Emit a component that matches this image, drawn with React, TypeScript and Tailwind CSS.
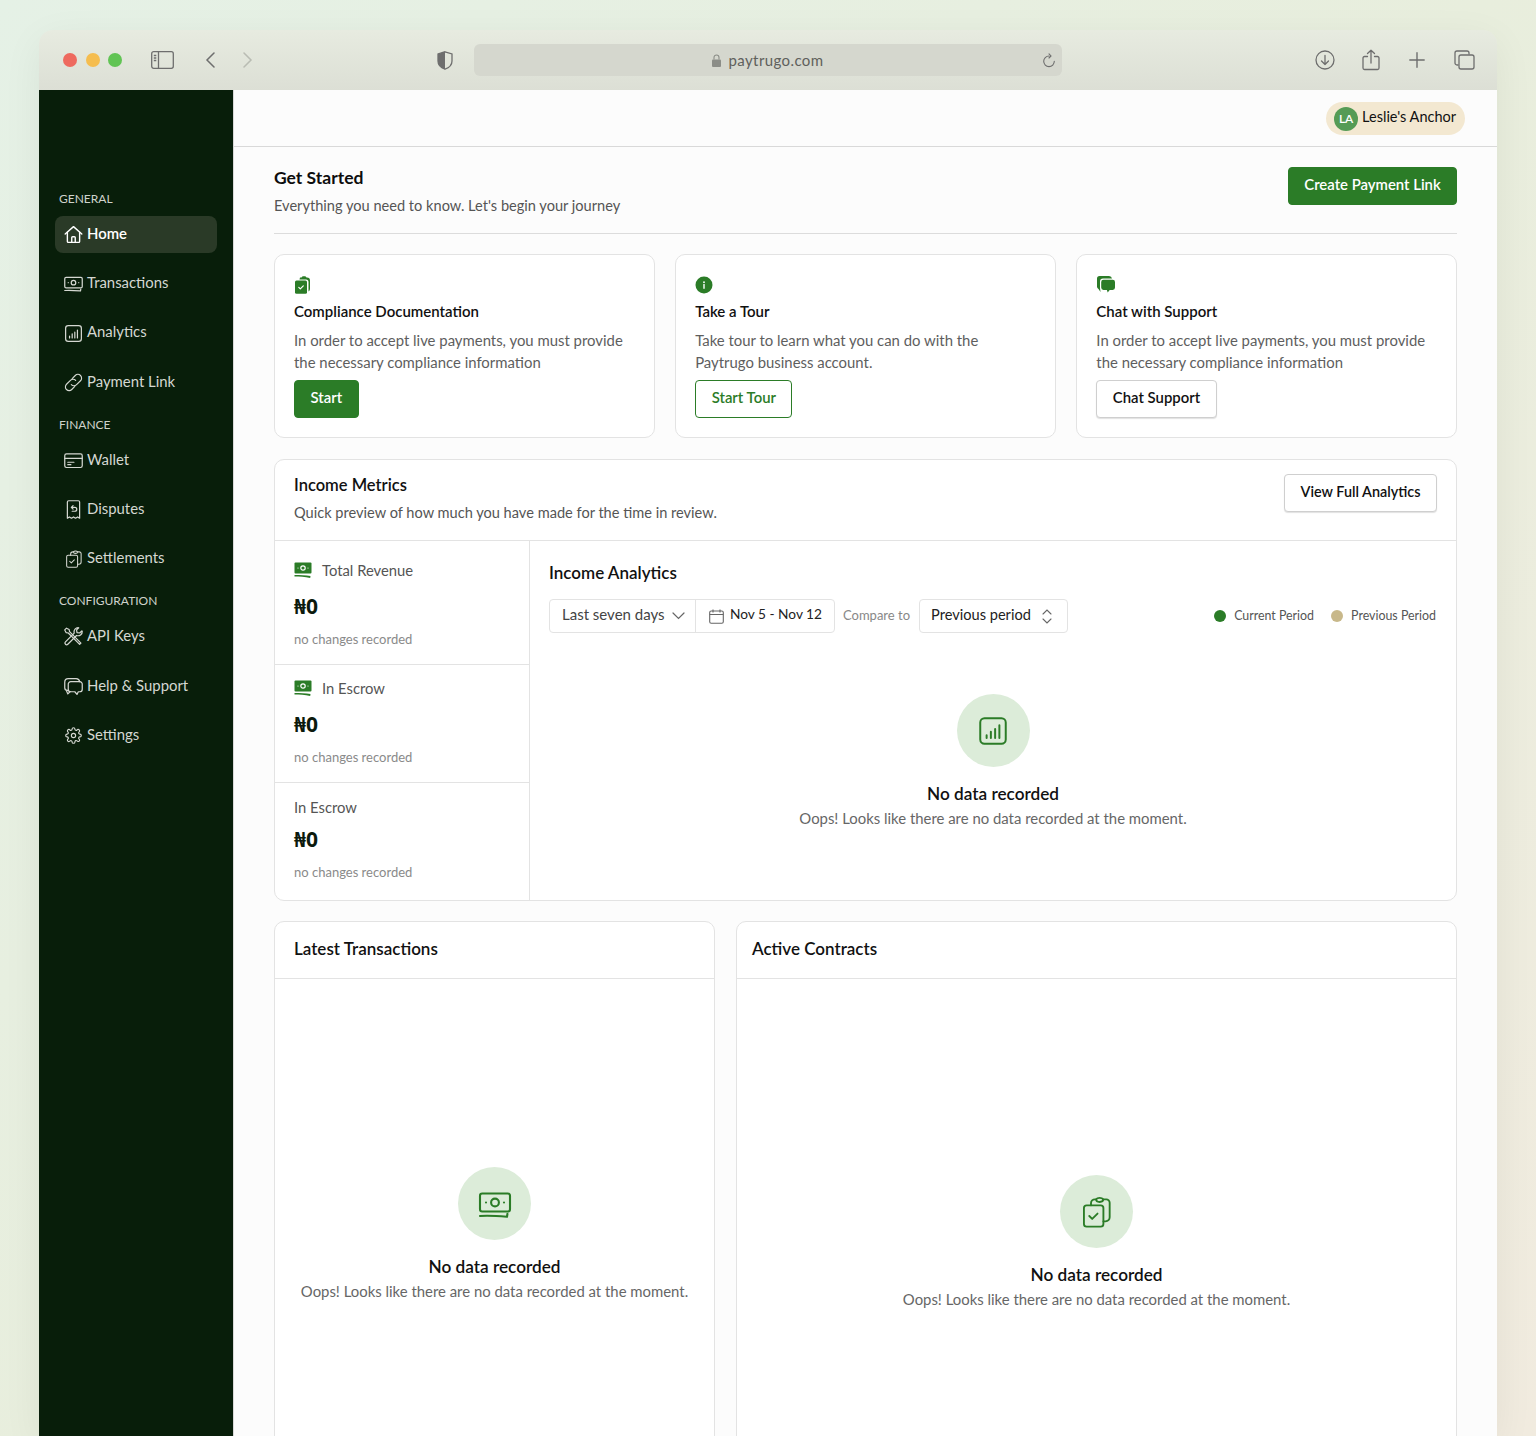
import type { ReactNode } from 'react';

type IconProps = { className?: string };

const Svg = ({ className, children, vb = '0 0 24 24', sw = 1.5 }: { className?: string; children: ReactNode; vb?: string; sw?: number }) => (
  <svg className={className} viewBox={vb} fill="none" stroke="currentColor" strokeWidth={sw} strokeLinecap="round" strokeLinejoin="round">
    {children}
  </svg>
);

// Sidebar + empty state icons
const HomeIcon = ({ className }: IconProps) => (
  <Svg className={className} sw={1.6}>
    <path d="M2.500 11.500 12 3l9.500 8.500" />
    <path d="M5 9.500V20a1 1 0 0 0 1 1h12a1 1 0 0 0 1-1V9.500" />
    <path d="M10 21v-5.500a1 1 0 0 1 1-1h2a1 1 0 0 1 1 1V21" />
  </Svg>
);
const CashIcon = ({ className }: IconProps) => (
  <Svg className={className} sw={1.4}>
    <rect x="2" y="5" width="20" height="12" rx="1.500" />
    <circle cx="12" cy="11" r="2.600" />
    <path d="M6 11h.01M18 11h.01M2 20c6-.5 12 0 18 .5l.300-2" />
  </Svg>
);
const ChartIcon = ({ className }: IconProps) => (
  <Svg className={className} sw={1.4}>
    <rect x="3" y="3" width="18" height="18" rx="3" />
    <path d="M7.500 17v-2M10.500 17v-4.500M13.500 17v-6.500M16.500 17V8" />
  </Svg>
);
const LinkIcon = ({ className }: IconProps) => (
  <Svg className={className} sw={1.3}>
    <path d="M10.500 7.500 14 4a4.200 4.200 0 0 1 6 6l-4.500 4.500a4.200 4.200 0 0 1-6 0" />
    <path d="M13.500 16.500 10 20a4.200 4.200 0 0 1-6-6l4.500-4.500a4.200 4.200 0 0 1 6 0" />
  </Svg>
);
const WalletIcon = ({ className }: IconProps) => (
  <Svg className={className} sw={1.4}>
    <rect x="2" y="4.500" width="20" height="15.500" rx="2" />
    <path d="M2 9.500h20M5.500 14h7M5.500 16.800h3.500" />
  </Svg>
);
const DisputeIcon = ({ className }: IconProps) => (
  <Svg className={className} sw={1.4}>
    <path d="M5 3.500a1.500 1.500 0 0 1 1.500-1.500h11A1.500 1.500 0 0 1 19 3.500V22l-2.300-1.500L14.300 22 12 20.500 9.700 22l-2.400-1.500L5 22z" />
    <path d="M10 9.500h3.500a2.200 2.200 0 0 1 0 4.500H10.500M11.500 7.500l-2 2 2 2" />
  </Svg>
);
const ClipboardsIcon = ({ className }: IconProps) => (
  <Svg className={className} sw={1.4}>
    <rect x="2.200" y="7" width="14.600" height="16" rx="2" />
    <path d="M7.500 7V5.500a3 3 0 0 1 3-3h.8a3 2 0 0 1 5.400 0h2.300a2.500 2.500 0 0 1 2.500 2.500V16a3 3 0 0 1-3 3h-1.700" />
    <path d="M11.300 2.500c0 1.300 1.200 2 2.700 2s2.700-.7 2.700-2M6.200 15l2.200 2.200 4-4" />
  </Svg>
);
const ToolsIcon = ({ className }: IconProps) => (
  <Svg className={className} sw={1.4}>
    <path d="m4 2.500 3 1.500.5 2.500 13 13-1.500 1.500-13-13L3.500 7.500 2 4.500z" />
    <path d="M22 6a4.800 4.800 0 0 1-6.500 4.800L5.500 20.800a1.900 1.900 0 0 1-2.700-2.700l10-10A4.800 4.800 0 0 1 18 2l-2.500 2.500.5 3 3 .5L21.500 5.500z" />
  </Svg>
);
const ChatsIcon = ({ className }: IconProps) => (
  <Svg className={className} sw={1.4}>
    <path d="M6 16.500H5a3 3 0 0 1-3-3V7a4 4 0 0 1 4-4h9a4 4 0 0 1 4 3.500" />
    <path d="M6 10a3 3 0 0 1 3-3.500h10a3 3 0 0 1 3 3.500v5a3 3 0 0 1-3 3h-1.500L16 21l-2.500-3H9a3 3 0 0 1-3-3z" />
    <path d="M4 17l1.500 3.500L8 18" />
  </Svg>
);
const GearIcon = ({ className }: IconProps) => (
  <Svg className={className} sw={1.6}>
    <circle cx="12" cy="12" r="3" />
    <path d="M19.400 15a1.700 1.700 0 0 0 .3 1.800l.1.100a2 2 0 1 1-2.800 2.800l-.1-.1a1.700 1.700 0 0 0-2.900 1.200V21a2 2 0 1 1-4 0v-.1a1.700 1.700 0 0 0-2.900-1.200l-.1.100a2 2 0 1 1-2.800-2.800l.1-.1a1.700 1.700 0 0 0-1.200-2.900H3a2 2 0 1 1 0-4h.1a1.700 1.700 0 0 0 1.200-2.900l-.1-.1a2 2 0 1 1 2.800-2.800l.1.100a1.700 1.700 0 0 0 2.900-1.200V3a2 2 0 1 1 4 0v.1a1.700 1.700 0 0 0 2.900 1.200l.1-.1a2 2 0 1 1 2.800 2.800l-.1.100a1.700 1.700 0 0 0 1.200 2.900h.1a2 2 0 1 1 0 4h-.1a1.700 1.700 0 0 0-1.500 1z" />
  </Svg>
);

// Solid green icons
const SolidClipboards = () => (
  <svg className="h-[18px] w-[18px]" viewBox="0 0 18 18">
    <path d="M6 1.500h1.500C8 .6 8.600.3 9.500.3h1c.9 0 1.500.3 2 1.200h.5a3 3 0 0 1 3 3v8.500a3 3 0 0 1-1.500 2.500V6a2.500 2.500 0 0 0-2.500-2.500H5.500z" fill="#2b7c27" />
    <rect x="1" y="4.500" width="12" height="13.200" rx="1.500" fill="#2b7c27" />
    <path d="m4.800 11.300 1.500 1.500 3-3" stroke="#fff" strokeWidth="1.200" fill="none" strokeLinecap="round" strokeLinejoin="round" />
  </svg>
);
const SolidInfo = () => (
  <svg className="h-[18px] w-[18px]" viewBox="0 0 18 18">
    <circle cx="9" cy="9" r="8.500" fill="#2b7c27" />
    <circle cx="9" cy="6.200" r=".9" fill="#fff" />
    <path d="M9 8.500v3.700" stroke="#fff" strokeWidth="1.400" strokeLinecap="round" />
  </svg>
);
const SolidChats = () => (
  <svg className="h-[20px] w-[20px]" viewBox="0 0 20 20">
    <path d="M3.500 1h9.500a3 3 0 0 1 3 2.500H7a3 3 0 0 0-3 3V13l.5 4L2.500 14A2.500 2.500 0 0 1 1 11.800V3.500A2.500 2.500 0 0 1 3.500 1z" fill="#2b7c27" />
    <path d="M7.500 4.800h9.200a2.300 2.300 0 0 1 2.300 2.300v5.500a2.300 2.300 0 0 1-2.300 2.300h-3l-2 2.600-.8-2.600H7.500a2.300 2.300 0 0 1-2.300-2.300V7.100a2.300 2.300 0 0 1 2.300-2.300z" fill="#2b7c27" />
  </svg>
);
const SolidCash = () => (
  <svg className="h-[17px] w-[18px]" viewBox="0 0 18 17">
    <rect x="0.500" y="0.500" width="17" height="11" rx="1" fill="#2b7c27" />
    <circle cx="9" cy="6" r="2.200" fill="none" stroke="#fff" strokeWidth="1.200" />
    <circle cx="4" cy="6" r=".6" fill="#fff" />
    <circle cx="14" cy="6" r=".6" fill="#fff" />
    <path d="M.5 13c5.500 0 11 .3 16 1l-.3 2C11 14.800 5.500 14.500.5 14.500z" fill="#2b7c27" />
  </svg>
);

type NavItem = { label: string; icon: (p: IconProps) => ReactNode; active?: boolean; iconClass?: string };

const generalNav: NavItem[] = [
  { label: 'Home', icon: HomeIcon, active: true },
  { label: 'Transactions', icon: CashIcon },
  { label: 'Analytics', icon: ChartIcon },
  { label: 'Payment Link', icon: LinkIcon },
];
const financeNav: NavItem[] = [
  { label: 'Wallet', icon: WalletIcon },
  { label: 'Disputes', icon: DisputeIcon },
  { label: 'Settlements', icon: ClipboardsIcon, iconClass: 'mx-[1.5px] h-[18px] w-[18px]' },
];
const configNav: NavItem[] = [
  { label: 'API Keys', icon: ToolsIcon },
  { label: 'Help & Support', icon: ChatsIcon },
  { label: 'Settings', icon: GearIcon, iconClass: 'mx-[2px] h-[17px] w-[17px]' },
];

const NavGroup = ({ title, items, className }: { title: string; items: NavItem[]; className?: string }) => (
  <div className={className}>
    <div className="mb-[9px] h-4 pl-[20px] text-[12px] leading-4 text-[#cfd3cc]">{title}</div>
    <div className="flex flex-col gap-[12.3px] px-4">
      {items.map(item => {
        const Icon = item.icon;
        return (
          <div
            key={item.label}
            className={`flex h-[37px] items-center gap-[3px] rounded-lg pl-[8px] pr-2 text-[14.9px] ${item.active ? 'bg-[#2a3a27] font-semibold text-white' : 'text-[#d5d8d2]'}`}
          >
            <Icon className={`shrink-0 ${item.iconClass ?? 'h-[21px] w-[21px]'}`} />
            <span className="-mt-[3px]">{item.label}</span>
          </div>
        );
      })}
    </div>
  </div>
);

const Sidebar = () => (
  <aside className="w-[195px] shrink-0 border-r border-[#d9d9d9] bg-[#081e0a] pt-[101px]">
    <NavGroup title="GENERAL" items={generalNav} />
    <NavGroup title="FINANCE" items={financeNav} className="mt-[16px]" />
    <NavGroup title="CONFIGURATION" items={configNav} className="mt-[16px]" />
  </aside>
);

const BrowserBar = () => (
  <div className="flex h-[60px] items-center bg-[linear-gradient(180deg,#e7ebe0,#dcdfd5)] text-[#6e6e6e]">
    <div className="ml-[24px] flex items-center gap-[8.5px]">
      <span className="h-[14px] w-[14px] rounded-full bg-[#ee6a5f]" />
      <span className="h-[14px] w-[14px] rounded-full bg-[#f5bd4f]" />
      <span className="h-[14px] w-[14px] rounded-full bg-[#61c454]" />
    </div>
    <svg className="ml-[29px] h-[18px] w-[23px]" viewBox="0 0 23 18" fill="none" stroke="currentColor" strokeWidth="1.300">
      <rect x=".7" y=".7" width="21.600" height="16.600" rx="2" />
      <path d="M7.500.7v16.600M2.800 4.500h2.500M2.800 7h2.500M2.800 9.500h2.500" />
    </svg>
    <svg className="ml-[31px] h-[16px] w-[10px]" viewBox="0 0 10 16" fill="none" stroke="currentColor" strokeWidth="1.500" strokeLinecap="round">
      <path d="M9 1 2 8l7 7" />
    </svg>
    <svg className="ml-[28px] h-[16px] w-[10px] text-[#b9bcb3]" viewBox="0 0 10 16" fill="none" stroke="currentColor" strokeWidth="1.500" strokeLinecap="round">
      <path d="m1 1 7 7-7 7" />
    </svg>
    <svg className="ml-[184px] h-[19px] w-[16px]" viewBox="0 0 16 19">
      <path d="M8 .8 15 3v7c0 4-3 6.800-7 8.200C4 16.800 1 14 1 10V3z" fill="none" stroke="currentColor" strokeWidth="1.300" />
      <path d="M8 .8V18.200C4 16.800 1 14 1 10V3z" fill="currentColor" />
    </svg>
    <div className="relative ml-[21px] flex h-[32px] w-[588px] items-center justify-center rounded-md bg-[#d5d7ce]">
      <svg className="mr-[7px] h-[13px] w-[9px] text-[#8b8d87]" viewBox="0 0 9 13">
        <path d="M2 5.500V3.500a2.500 2.500 0 0 1 5 0v2" fill="none" stroke="currentColor" strokeWidth="1.100" />
        <rect y="5.500" width="9" height="7.500" rx="1" fill="currentColor" />
      </svg>
      <span className="text-[15px] tracking-[0.4px] text-[#5f605c]">paytrugo.com</span>
      <svg className="absolute right-[6px] top-[9px] h-[15px] w-[14px]" viewBox="0 0 14 15" fill="none" stroke="currentColor" strokeWidth="1.100" strokeLinecap="round">
        <path d="M7 3a5.300 5.300 0 1 0 5.300 5.300M7 .8 9 3 7 5" />
      </svg>
    </div>
    <svg className="ml-[253px] h-[20px] w-[20px]" viewBox="0 0 20 20" fill="none" stroke="currentColor" strokeWidth="1.300" strokeLinecap="round" strokeLinejoin="round">
      <circle cx="10" cy="10" r="9" />
      <path d="M10 5.500v9M6.500 11l3.500 3.500 3.500-3.500" />
    </svg>
    <svg className="ml-[27px] h-[22px] w-[18px]" viewBox="0 0 18 22" fill="none" stroke="currentColor" strokeWidth="1.300" strokeLinecap="round" strokeLinejoin="round">
      <path d="M5.500 7.500H2.500a1.500 1.500 0 0 0-1.500 1.500v10a1.500 1.500 0 0 0 1.500 1.500h13A1.500 1.500 0 0 0 17 19V9a1.500 1.500 0 0 0-1.500-1.500h-3" />
      <path d="M9 14V1.200M5.500 4.500 9 1.200l3.500 3.300" />
    </svg>
    <svg className="ml-[29px] h-[16px] w-[16px]" viewBox="0 0 16 16" fill="none" stroke="currentColor" strokeWidth="1.400" strokeLinecap="round">
      <path d="M8 .8v14.400M.8 8h14.400" />
    </svg>
    <svg className="ml-[29px] h-[20px] w-[21px]" viewBox="0 0 21 20" fill="none" stroke="currentColor" strokeWidth="1.300">
      <path d="M4.500 15H3a2 2 0 0 1-2-2V3a2 2 0 0 1 2-2h10a2 2 0 0 1 2 2v1.500" />
      <rect x="5" y="5" width="15" height="14" rx="2" />
    </svg>
  </div>
);

const Button = ({ children, variant, className, size = 'text-[14.9px]' }: { children: ReactNode; variant: 'solid' | 'green' | 'plain'; className?: string; size?: string }) => {
  const styles = {
    solid: 'bg-[#2b7c27] text-white border-[#2b7c27]',
    green: 'bg-white text-[#2b7c27] border-[#2b7c27]',
    plain: 'bg-white text-[#111] border-[#cfcfcf] shadow-[0_1px_1px_rgba(0,0,0,0.12)]',
  }[variant];
  return (
    <button className={`flex h-[38px] items-center justify-center whitespace-nowrap rounded-[4px] border px-[15.5px] pb-[3px] font-semibold ${size} ${styles} ${className ?? ''}`}>
      {children}
    </button>
  );
};

const GuideCard = ({ icon, title, text, action }: { icon: ReactNode; title: string; text: ReactNode; action: ReactNode }) => (
  <div className="h-[184px] rounded-[10px] border border-[#e3e3e3] bg-white px-[19px] pt-[20px]">
    <div className="flex h-[19px] items-center">{icon}</div>
    <h3 className="mt-[7px] text-[15px] font-semibold leading-[20px] text-[#111]">{title}</h3>
    <p className="mt-[8px] text-[14.9px] leading-[22px] text-[#5e5e5e]">{text}</p>
    <div className="mt-[7px] flex">{action}</div>
  </div>
);

const Metric = ({ label, icon, className, valueGap = 'mt-[12px]' }: { label: string; icon?: boolean; className?: string; valueGap?: string }) => (
  <div className={`px-[19px] ${className ?? ''}`}>
    <div className="flex h-[20px] items-center gap-[10px] text-[14.8px] text-[#555]">
      {icon && <SolidCash />}
      <span>{label}</span>
    </div>
    <div className={`${valueGap} font-[family-name:'Noto_Sans',sans-serif] text-[21px] font-bold leading-[28px] text-[#0c1a0d]`}>₦0</div>
    <div className="mt-[10px] text-[13px] leading-[18px] text-[#8a8a8a]">no changes recorded</div>
  </div>
);

const EmptyState = ({ icon, className }: { icon: ReactNode; className?: string }) => (
  <div className={`flex flex-col items-center ${className ?? ''}`}>
    <div className="flex h-[73px] w-[73px] items-center justify-center rounded-full bg-[#dcecd9] text-[#2b7c27]">{icon}</div>
    <div className="mt-[15.5px] text-[17.2px] font-semibold leading-[22px] text-[#111]">No data recorded</div>
    <div className="mt-[3.5px] text-[14.9px] leading-[20px] text-[#666]">Oops! Looks like there are no data recorded at the moment.</div>
  </div>
);

const Dashboard = () => (
  <main className="min-w-0 flex-1 bg-[#fcfcfc]">
    <header className="flex h-[57px] items-start justify-end border-b border-[#d9d9d9] pr-[32px] pt-[12px]">
      <div className="flex h-[33px] items-center gap-[4px] rounded-full bg-[#f3e8d1] pl-[8px] pr-[9px]">
        <span className="flex h-6 w-6 items-center justify-center rounded-full bg-[#559b55] text-[12px] font-semibold text-white">LA</span>
        <span className="-mt-[3px] text-[14.5px] text-[#111]">Leslie's Anchor</span>
      </div>
    </header>

    <div className="px-[40px] pt-[20px]">
      <div className="flex items-start justify-between border-b border-[#dcdcdc] pb-[17px]">
        <div>
          <h1 className="text-[17.5px] font-bold leading-[22px] text-[#0d0d0d]">Get Started</h1>
          <p className="mt-[7px] text-[14.6px] leading-[20px] text-[#555]">Everything you need to know. Let's begin your journey</p>
        </div>
        <Button variant="solid" className="w-[169px]">Create Payment Link</Button>
      </div>

      <div className="mt-[20px] grid grid-cols-3 gap-[20.5px]">
        <GuideCard
          icon={<SolidClipboards />}
          title="Compliance Documentation"
          text={<>In order to accept live payments, you must provide<br />the necessary compliance information</>}
          action={<Button variant="solid">Start</Button>}
        />
        <GuideCard
          icon={<SolidInfo />}
          title="Take a Tour"
          text={<>Take tour to learn what you can do with the<br />Paytrugo business account.</>}
          action={<Button variant="green">Start Tour</Button>}
        />
        <GuideCard
          icon={<SolidChats />}
          title="Chat with Support"
          text={<>In order to accept live payments, you must provide<br />the necessary compliance information</>}
          action={<Button variant="plain">Chat Support</Button>}
        />
      </div>

      <section className="mt-[21px] rounded-[10px] border border-[#e3e3e3] bg-white">
        <div className="flex h-[81px] items-start justify-between border-b border-[#e3e3e3] px-[19px] pt-[14px]">
          <div>
            <h2 className="text-[16.5px] font-semibold leading-[22px] text-[#111]">Income Metrics</h2>
            <p className="mt-[7px] text-[14.6px] leading-[20px] text-[#555]">Quick preview of how much you have made for the time in review.</p>
          </div>
          <Button variant="plain" size="text-[14.4px]">View Full Analytics</Button>
        </div>
        <div className="flex h-[359px]">
          <div className="w-[255px] shrink-0 border-r border-[#e3e3e3]">
            <Metric label="Total Revenue" icon className="h-[124px] border-b border-[#e3e3e3] pt-[19px]" />
            <Metric label="In Escrow" icon className="h-[118px] border-b border-[#e3e3e3] pt-[13px]" />
            <Metric label="In Escrow" className="pt-[14px]" valueGap="mt-[8px]" />
          </div>
          <div className="min-w-0 flex-1 px-[19px] pt-[21px]">
            <h3 className="text-[17px] font-semibold leading-[22px] text-[#111]">Income Analytics</h3>
            <div className="mt-[15px] flex items-center">
              <div className="flex h-[34px] items-center rounded-[4px] border border-[#e3e3e3] text-[15px]">
                <div className="flex h-full w-[146px] items-center justify-between border-r border-[#e3e3e3] pb-[4px] pl-[12px] pr-[10px] text-[#444]">
                  <span>Last seven days</span>
                  <svg className="mt-[4px] h-[8px] w-[13px]" viewBox="0 0 13 8" fill="none" stroke="#666" strokeWidth="1.200" strokeLinecap="round"><path d="m1 1 5.500 5.500L12 1" /></svg>
                </div>
                <div className="flex h-full w-[138px] items-center gap-[6px] pl-[13px] text-[13.7px] text-[#222]">
                  <svg className="h-[15px] w-[15px]" viewBox="0 0 15 15" fill="none" stroke="#666" strokeWidth="1.100"><rect x=".7" y="2" width="13.600" height="12.300" rx="1.500" /><path d="M.7 5.500h13.600M4 .5v3M11 .5v3" /></svg>
                  <span className="-mt-[3px]">Nov 5 - Nov 12</span>
                </div>
              </div>
              <span className="ml-[8px] text-[13px] text-[#888]">Compare to</span>
              <div className="ml-[9px] flex h-[34px] w-[149px] items-center justify-between rounded-[4px] border border-[#e3e3e3] pl-[11px] pr-[15px] text-[14.6px] text-[#222]">
                <span className="-mt-[3px]">Previous period</span>
                <svg className="h-[15px] w-[10px]" viewBox="0 0 10 15" fill="none" stroke="#666" strokeWidth="1.100" strokeLinecap="round"><path d="m1 5 4-4 4 4M1 10l4 4 4-4" /></svg>
              </div>
              <div className="ml-auto mr-px flex items-center text-[12.4px] text-[#555]">
                <span className="mr-[8px] h-3 w-3 rounded-full bg-[#2b7c27]" />
                <span>Current Period</span>
                <span className="ml-[17px] mr-[8px] h-3 w-3 rounded-full bg-[#c8b88a]" />
                <span>Previous Period</span>
              </div>
            </div>
            <EmptyState className="mt-[61px]" icon={<ChartIcon className="h-[34px] w-[34px]" />} />
          </div>
        </div>
      </section>

      <div className="mt-[20px] flex gap-[21px]">
        <section className="h-[600px] w-[441px] shrink-0 rounded-t-[10px] border border-[#e3e3e3] bg-white">
          <h2 className="flex h-[57px] items-center border-b border-[#e3e3e3] pb-[2px] pl-[19px] text-[17px] font-semibold text-[#111]">Latest Transactions</h2>
          <EmptyState className="mt-[188px]" icon={<CashIcon className="h-[36px] w-[36px]" />} />
        </section>
        <section className="h-[600px] min-w-0 flex-1 rounded-t-[10px] border border-[#e3e3e3] bg-white">
          <h2 className="flex h-[57px] items-center border-b border-[#e3e3e3] pb-[2px] pl-[15px] text-[17px] font-semibold text-[#111]">Active Contracts</h2>
          <EmptyState className="mt-[196px]" icon={<ClipboardsIcon className="h-[32px] w-[32px]" />} />
        </section>
      </div>
    </div>
  </main>
);

export default function App() {
  return (
    <div className="h-[1436px] overflow-hidden bg-[linear-gradient(135deg,#e5f1e6,#e8eedd_50%,#f1ebdf)] pl-[39px] pr-[39px] pt-[30px] font-[family-name:Lato,sans-serif]">
      <div className="h-[1406px] overflow-hidden rounded-t-[14px] shadow-[0_10px_40px_rgba(0,0,0,0.06)]">
        <BrowserBar />
        <div className="flex h-[1346px]">
          <Sidebar />
          <Dashboard />
        </div>
      </div>
    </div>
  );
}
